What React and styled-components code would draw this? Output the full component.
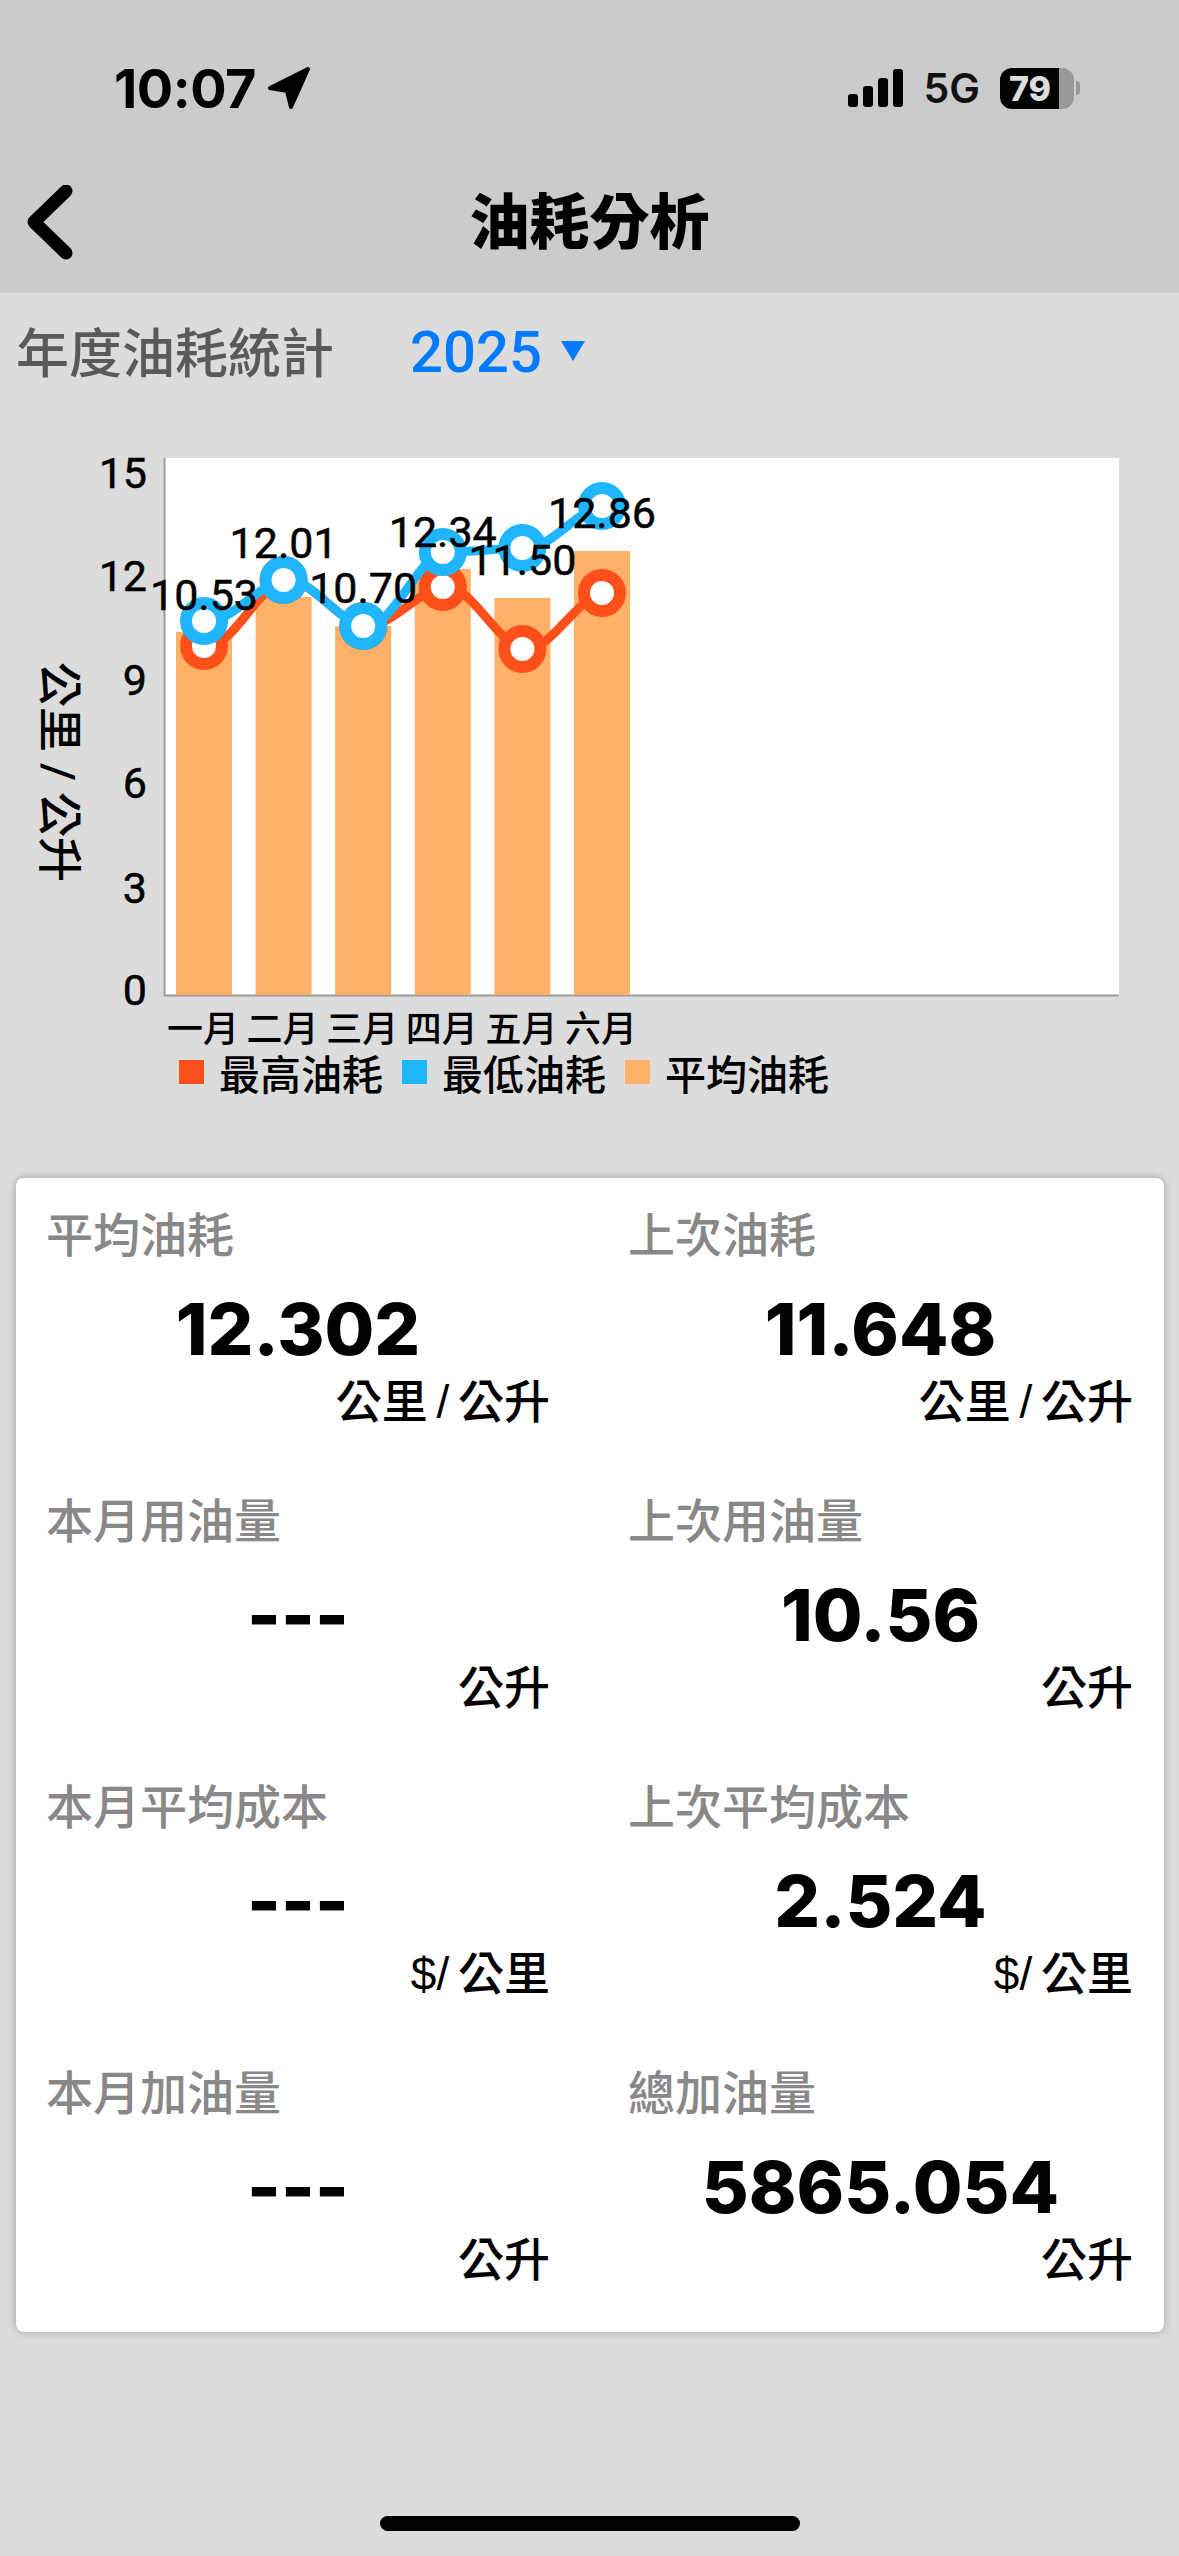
import React from "react";
import styled, { createGlobalStyle } from "styled-components";

const FONT = `"Liberation Sans", "Noto Sans CJK TC", sans-serif`;
const NUMBER_FONT = `Roboto, "Noto Sans CJK TC", sans-serif`;

const GlobalStyle = createGlobalStyle`
  html, body {
    margin: 0;
    padding: 0;
    background: #dcdcdc;
  }
  body {
    font-family: ${FONT};
  }
`;

const Page = styled.div`
  display: flex;
  flex-direction: column;
  width: 1179px;
  height: 2556px;
  overflow: hidden;
  background: #dcdcdc;
`;

const Header = styled.header`
  display: flex;
  flex-direction: column;
  height: 293px;
  background: #cbcbcb;
`;

const StatusBar = styled.div`
  display: flex;
  align-items: center;
  justify-content: space-between;
  height: 64px;
  margin-top: 56px;
  padding: 0 99px 0 114px;
`;

const StatusLeft = styled.div`
  display: flex;
  align-items: center;
  gap: 10px;
`;

const Time = styled.span`
  font-family: Inter, ${FONT};
  font-size: 54px;
  font-weight: 700;
  letter-spacing: -0.5px;
  color: #000;
`;

const StatusRight = styled.div`
  display: flex;
  align-items: center;
  gap: 20px;
`;

const Network = styled.span`
  font-family: Inter, ${FONT};
  font-size: 41px;
  font-weight: 600;
  color: #111;
`;

const Battery = styled.div`
  display: flex;
  align-items: center;
  justify-content: center;
  width: 74px;
  height: 41px;
  box-sizing: border-box;
  padding-right: 14px;
  border-radius: 12px;
  overflow: hidden;
  background: linear-gradient(to right, #000 80%, #999 80%);
  color: #dcdcdc;
  font-family: Inter, ${FONT};
  font-size: 34px;
  font-weight: 800;
`;

const BatteryWrap = styled.div`
  display: flex;
  align-items: center;
  gap: 2px;
`;

const BatteryNub = styled.span`
  width: 4px;
  height: 14px;
  border-radius: 0 4px 4px 0;
  background: #999;
`;

const NavBar = styled.div`
  position: relative;
  display: flex;
  align-items: center;
  justify-content: center;
  height: 100px;
  margin-top: 47px;
`;

const BackButton = styled.svg`
  position: absolute;
  left: 24px;
  top: 18px;
`;

const Title = styled.h1`
  margin: 0;
  font-size: 60px;
  font-weight: 900;
  color: #000;
`;

const YearRow = styled.div`
  display: flex;
  align-items: center;
  height: 80px;
  margin-top: 17px;
  padding-left: 16px;
`;

const YearLabel = styled.span`
  font-size: 53px;
  font-weight: 500;
  color: #5a5a5a;
`;

const YearValue = styled.span`
  margin: 4px 0 0 76px;
  font-family: ${NUMBER_FONT};
  font-size: 58px;
  font-weight: 500;
  color: #007aff;
`;

const YearCaret = styled.span`
  width: 0;
  height: 0;
  margin: 2px 0 0 19px;
  border-left: 12px solid transparent;
  border-right: 12px solid transparent;
  border-top: 20px solid #007aff;
`;

const ChartSvg = styled.svg`
  display: block;
  margin-top: 50px;
`;

const Legend = styled.div`
  display: flex;
  align-items: center;
  gap: 19px;
  height: 56px;
  margin-top: -6px;
  padding-left: 179px;
`;

const LegendItem = styled.div`
  display: flex;
  align-items: center;
  gap: 15px;
  font-size: 41px;
  font-weight: 500;
  color: #000;
`;

const LegendSwatch = styled.span`
  width: 25px;
  height: 24px;
  background: ${({ $color }) => $color};
`;

const Card = styled.section`
  display: grid;
  grid-template-columns: 504px 505px;
  column-gap: 78px;
  row-gap: 63px;
  width: 1148px;
  box-sizing: border-box;
  margin: 78px 0 0 16px;
  padding: 28px 0 45px 30px;
  border-radius: 8px;
  background: #fff;
  box-shadow: 0 0 9px rgba(0, 0, 0, 0.28);
`;

const Metric = styled.div`
  display: flex;
  flex-direction: column;
`;

const MetricLabel = styled.div`
  font-size: 47px;
  line-height: 60px;
  font-weight: 500;
  color: #888;
`;

const MetricValue = styled.div`
  margin-top: 17px;
  font-family: Inter, ${FONT};
  font-size: 72px;
  line-height: 92px;
  font-weight: 800;
  text-align: center;
  color: #000;
`;

const MetricUnit = styled.div`
  font-size: 46px;
  line-height: 54px;
  font-weight: 500;
  word-spacing: -4px;
  text-align: right;
  color: #000;
`;

const HomeBar = styled.div`
  align-self: center;
  width: 420px;
  height: 15px;
  margin-top: auto;
  margin-bottom: 25px;
  border-radius: 8px;
  background: #000;
`;

const ChartText = styled.text`
  font-family: ${NUMBER_FONT};
  font-size: ${({ $size }) => $size || 43}px;
  font-weight: 500;
  fill: #000;
`;

const ChartNumber = styled.text`
  font-family: ${NUMBER_FONT};
  font-size: 43px;
  font-weight: 400;
  fill: #000;
  stroke: #000;
  stroke-width: 0.5px;
`;

const MONTHS = ["一月", "二月", "三月", "四月", "五月", "六月"];
const BAR_TOPS = [632, 597, 626, 569, 598, 551];
const HIGH = [646, 580, 626, 587, 649, 593];
const LOW = [621, 580, 626, 552, 548, 506];
const LABELS = [
  ["10.53", 595],
  ["12.01", 543],
  ["10.70", 588],
  ["12.34", 532],
  ["11.50", 560],
  ["12.86", 513],
];
const TICKS = [
  ["15", 473],
  ["12", 576],
  ["9", 680],
  ["6", 783],
  ["3", 888],
  ["0", 990],
];
const centerX = (i) => 204 + i * 79.6;

const linePath = (values) =>
  values
    .map((y, i) => {
      if (i === 0) return `M${centerX(i)} ${y}`;
      const px = centerX(i - 1);
      const py = values[i - 1];
      const x = centerX(i);
      return `C${px + 26} ${py - (y - py) * 0.1} ${x - 26} ${y + (py - y) * 0.1} ${x} ${y}`;
    })
    .join(" ");

const Series = ({ values, color }) => (
  <g>
    <path d={linePath(values)} fill="none" stroke={color} strokeWidth="9" />
    {values.map((y, i) => (
      <circle
        key={i}
        cx={centerX(i)}
        cy={y}
        r="18"
        fill="#fff"
        stroke={color}
        strokeWidth="12"
      />
    ))}
  </g>
);

const FuelChart = () => (
  <ChartSvg width="1179" height="610" viewBox="0 440 1179 610">
    <rect x="165" y="458" width="954" height="537" fill="#fff" />
    <path d="M164.5 458V995.5H1119" fill="none" stroke="#999" strokeWidth="2" />
    {BAR_TOPS.map((top, i) => (
      <rect key={i} x={centerX(i) - 28} y={top} width="56" height={995 - top} fill="#ffb267" />
    ))}
    <Series values={HIGH} color="#ff4f1a" />
    <Series values={LOW} color="#1fb6ff" />
    {LABELS.map(([text, y], i) => (
      <ChartNumber key={text} x={centerX(i)} y={y + 15} textAnchor="middle">
        {text}
      </ChartNumber>
    ))}
    {TICKS.map(([text, y]) => (
      <ChartNumber key={text} x="147" y={y + 15} textAnchor="end">
        {text}
      </ChartNumber>
    ))}
    {MONTHS.map((text, i) => (
      <ChartText key={text} $size={36} x={centerX(i) - 1} y={1042} textAnchor="middle">
        {text}
      </ChartText>
    ))}
    <ChartText
      $size={45}
      textAnchor="middle"
      transform="translate(43 772) rotate(90)"
    >
      公里 / 公升
    </ChartText>
  </ChartSvg>
);

const METRICS = [
  ["平均油耗", "12.302", "公里 / 公升"],
  ["上次油耗", "11.648", "公里 / 公升"],
  ["本月用油量", "---", "公升"],
  ["上次用油量", "10.56", "公升"],
  ["本月平均成本", "---", "$/ 公里"],
  ["上次平均成本", "2.524", "$/ 公里"],
  ["本月加油量", "---", "公升"],
  ["總加油量", "5865.054", "公升"],
];

const App = () => (
  <Page>
    <GlobalStyle />
    <Header>
      <StatusBar>
        <StatusLeft>
          <Time>10:07</Time>
          <svg width="46" height="46" viewBox="265 66 46 46">
            <path
              d="M307 70L269 89L286 92L290 108Z"
              fill="#000"
              stroke="#000"
              strokeWidth="4"
              strokeLinejoin="round"
            />
          </svg>
        </StatusLeft>
        <StatusRight>
          <svg width="56" height="38" viewBox="0 0 56 38">
            <rect x="0" y="25" width="10" height="13" rx="3" fill="#000" />
            <rect x="15" y="17" width="10" height="21" rx="3" fill="#000" />
            <rect x="30" y="9" width="10" height="29" rx="3" fill="#000" />
            <rect x="45" y="0" width="10" height="38" rx="3" fill="#000" />
          </svg>
          <Network>5G</Network>
          <BatteryWrap>
            <Battery>79</Battery>
            <BatteryNub />
          </BatteryWrap>
        </StatusRight>
      </StatusBar>
      <NavBar>
        <BackButton width="60" height="84" viewBox="0 0 60 84">
          <path
            d="M42 6L10 37L42 68"
            fill="none"
            stroke="#000"
            strokeWidth="13"
            strokeLinecap="round"
            strokeLinejoin="round"
          />
        </BackButton>
        <Title>油耗分析</Title>
      </NavBar>
    </Header>
    <YearRow>
      <YearLabel>年度油耗統計</YearLabel>
      <YearValue>2025</YearValue>
      <YearCaret />
    </YearRow>
    <FuelChart />
    <Legend>
      <LegendItem>
        <LegendSwatch $color="#ff4f1a" />
        最高油耗
      </LegendItem>
      <LegendItem>
        <LegendSwatch $color="#1fb6ff" />
        最低油耗
      </LegendItem>
      <LegendItem>
        <LegendSwatch $color="#ffb267" />
        平均油耗
      </LegendItem>
    </Legend>
    <Card>
      {METRICS.map(([label, value, unit]) => (
        <Metric key={label}>
          <MetricLabel>{label}</MetricLabel>
          <MetricValue>{value}</MetricValue>
          <MetricUnit>{unit}</MetricUnit>
        </Metric>
      ))}
    </Card>
    <HomeBar />
  </Page>
);

export default App;
